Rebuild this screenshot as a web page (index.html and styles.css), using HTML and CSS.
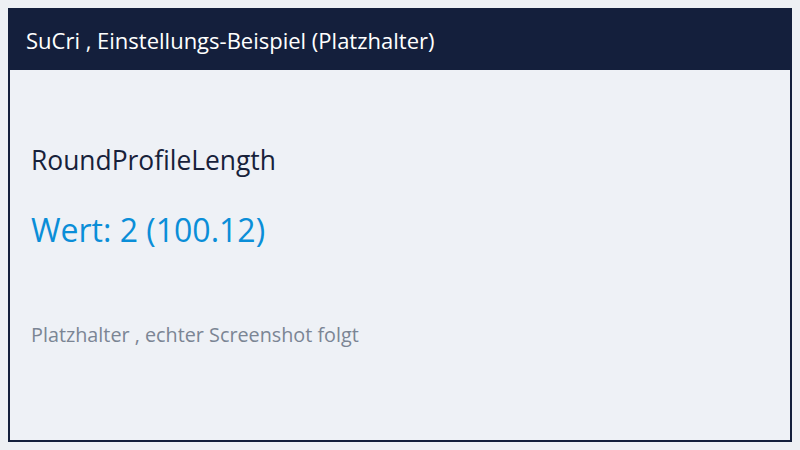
FILE: index.html
```html
<!DOCTYPE html>
<html lang="de">
<head>
    <meta charset="UTF-8">
    <title>SuCri Einstellung</title>
    <link rel="stylesheet" href="styles.css">
</head>
<body>
    <div class="frame">
        <div class="header">SuCri , Einstellungs-Beispiel (Platzhalter)</div>
        <div class="content">
            <div class="name">RoundProfileLength</div>
            <div class="value">Wert: 2 (100.12)</div>
            <div class="note">Platzhalter , echter Screenshot folgt</div>
        </div>
    </div>
</body>
</html>
```

FILE: styles.css
```css
body {
    margin: 0;
    padding: 8px;
    background-color: #eef0f4;
    font-family: "Open Sans", "Noto Sans", sans-serif;
}
.frame {
    height: 434px;
    box-sizing: border-box;
    border: 2px solid #141f3c;
    background-color: #eef1f6;
    display: flex;
    flex-direction: column;
}
.header {
    height: 60px;
    background-color: #141f3c;
    color: #ffffff;
    font-size: 22px;
    display: flex;
    align-items: center;
    padding-left: 16px;
}
.content {
    padding: 72px 21px 0;
}
.name {
    font-size: 26.4px;
    color: #17213a;
}
.value {
    margin-top: 29.5px;
    font-size: 32px;
    color: #0a8ed8;
}
.note {
    margin-top: 70px;
    font-size: 19.8px;
    color: #7b8594;
}
```
